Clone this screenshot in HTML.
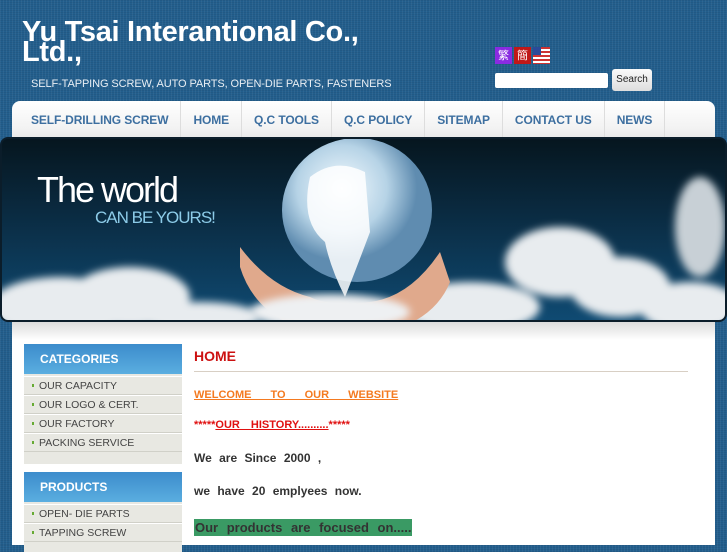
<!DOCTYPE html>
<html><head><meta charset="utf-8"><style>
*{margin:0;padding:0;box-sizing:border-box}
body{width:727px;height:545px;overflow:hidden;font-family:"Liberation Sans",sans-serif;background:#1f5d8a;position:relative;
background-image:repeating-linear-gradient(90deg,rgba(255,255,255,.05) 0 1px,transparent 1px 3px),repeating-linear-gradient(0deg,rgba(0,0,0,.06) 0 1px,transparent 1px 2px);background-color:#235f8d}
.abs{position:absolute}
h1{position:absolute;left:22px;top:22px;color:#fff;font-size:29px;line-height:20px;font-weight:bold;width:360px;letter-spacing:-0.3px}
.tag{left:31px;top:78px;color:#e8eef4;font-size:11px;letter-spacing:-0.1px}
.nav{left:12px;top:101px;width:703px;height:40px;background:linear-gradient(#fff,#f2f2f2 70%,#e6e6e6);border-radius:8px 8px 0 0;display:flex}
.nav div{padding:0 12px;line-height:38px;font-size:12px;font-weight:bold;color:#3d6fa0;border-right:1px solid #ddd;letter-spacing:-0.1px}
.nav div:first-child{padding-left:19px}
.banner{left:0;top:137px;width:727px;height:185px;border-radius:8px;overflow:hidden;background:linear-gradient(#06161f 0%,#0a2a40 40%,#0f4a72 100%);border:2px solid #0b1d2a}
.content{left:12px;top:322px;width:703px;height:223px;background:#fff}
.shade{left:12px;top:322px;width:703px;height:18px;background:linear-gradient(#dcdcdc,#fff)}
.box{position:absolute;left:24px;width:158px;background:#e8e8e2}
.bh{height:30px;background:linear-gradient(#3c8ccc,#5aaee0);color:#fff;font-weight:bold;font-size:12px;padding:8px 0 0 16px}
.bi{height:19px;border-top:1px solid #fff;border-bottom:1px solid #d0d0c8;font-size:10.5px;color:#444;padding:3px 0 0 15px;position:relative}
.bi:before{content:"";position:absolute;left:8px;top:7px;width:2px;height:3px;background:#6a3}
.txt{position:absolute;left:194px;font-size:12px;font-weight:bold;color:#333;word-spacing:4px}
</style></head><body>
<h1>Yu Tsai Interantional Co., Ltd.,</h1>
<div class="abs tag">SELF-TAPPING SCREW, AUTO PARTS, OPEN-DIE PARTS, FASTENERS</div>
<div class="abs" style="left:495px;top:47px;width:17px;height:17px;background:#8a2be2;color:#fff;font-size:11px;text-align:center;line-height:17px;font-family:'Noto Sans CJK TC',sans-serif">繁</div>
<div class="abs" style="left:514px;top:47px;width:17px;height:17px;background:#c01818;color:#fff;font-size:11px;text-align:center;line-height:17px;font-family:'Noto Sans CJK SC',sans-serif">簡</div>
<div class="abs" style="left:533px;top:47px;width:17px;height:17px;background:repeating-linear-gradient(#c33 0 2px,#fff 2px 4px)"><div style="width:8px;height:8px;background:#2a4a9a"></div></div>
<div class="abs" style="left:495px;top:73px;width:113px;height:15px;background:#fff;border-radius:2px"></div>
<div class="abs" style="left:612px;top:69px;width:40px;height:22px;background:linear-gradient(#fafafa,#ddd);border-radius:3px;font-size:10px;text-align:center;line-height:22px;color:#222">Search</div>
<div class="abs nav"><div>SELF-DRILLING SCREW</div><div>HOME</div><div>Q.C TOOLS</div><div>Q.C POLICY</div><div>SITEMAP</div><div>CONTACT US</div><div>NEWS</div></div>
<div class="abs banner">
<svg width="727" height="185" style="position:absolute;left:-2px;top:-2px">
<defs><radialGradient id="g" cx=".4" cy=".35"><stop offset="0" stop-color="#f4fbff"/><stop offset=".6" stop-color="#b6d3e6"/><stop offset="1" stop-color="#5f8cb0"/></radialGradient>
<filter id="b"><feGaussianBlur stdDeviation="4"/></filter></defs>
<g filter="url(#b)" fill="#e8ecef">
<ellipse cx="60" cy="170" rx="70" ry="30"/><ellipse cx="130" cy="160" rx="60" ry="30"/><ellipse cx="200" cy="180" rx="60" ry="15"/>
<ellipse cx="470" cy="170" rx="70" ry="25"/><ellipse cx="560" cy="125" rx="55" ry="35"/><ellipse cx="620" cy="150" rx="50" ry="30"/>
<ellipse cx="700" cy="90" rx="25" ry="50" fill="#c8d0d6"/><ellipse cx="690" cy="170" rx="50" ry="25"/>
</g>
<path d="M240 110 q30 40 70 50 q20 10 60 5 q40 -5 70 -50 l10 30 q-20 50 -100 55 q-90 -5 -110 -70z" fill="#e0a98c"/>
<ellipse cx="357" cy="73" rx="75" ry="72" fill="url(#g)"/>
<path d="M310 40 q25 -20 55 -5 l5 60 q-15 40 -25 65 q-15 -30 -20 -55 q-25 -20 -15 -65z" fill="#fff" opacity=".85"/>
<g filter="url(#b)" fill="#eef0f2"><ellipse cx="330" cy="175" rx="80" ry="18"/></g>
<text x="37" y="65" fill="#fff" font-size="36" font-family="Liberation Sans Narrow,Liberation Sans,sans-serif" letter-spacing="-2">The world</text>
<text x="95" y="86" fill="#8ccbe8" font-size="17" font-family="Liberation Sans Narrow,Liberation Sans,sans-serif" letter-spacing="-1">CAN BE YOURS!</text>
</svg></div>
<div class="abs content"></div><div class="abs shade"></div>
<div class="box" style="top:344px;height:120px"><div class="bh">CATEGORIES</div><div style="height:2px"></div><div class="bi">OUR CAPACITY</div><div class="bi">OUR LOGO &amp; CERT.</div><div class="bi">OUR FACTORY</div><div class="bi">PACKING SERVICE</div></div>
<div class="box" style="top:472px;height:80px"><div class="bh">PRODUCTS</div><div style="height:2px"></div><div class="bi">OPEN- DIE PARTS</div><div class="bi">TAPPING SCREW</div></div>
<div class="abs" style="left:194px;top:348px;color:#cc1111;font-size:14px;font-weight:bold">HOME</div>
<div class="abs" style="left:194px;top:371px;width:494px;height:1px;background:#d8cfc4"></div>
<div class="txt" style="top:389px;color:#f47a20;font-size:11px;text-decoration:underline;word-spacing:16px">WELCOME TO OUR WEBSITE</div>
<div class="txt" style="top:419px;color:#e01010;font-size:11px;word-spacing:8px">*****<u>OUR HISTORY..........</u>*****</div>
<div class="txt" style="top:451px">We are Since 2000 ,</div>
<div class="txt" style="top:484px">we have 20 emplyees now.</div>
<div class="txt" style="top:519px;background:#3a9a64;padding:1px 1px;font-size:13px;word-spacing:5px">Our products are focused on.....</div>
</body></html>
